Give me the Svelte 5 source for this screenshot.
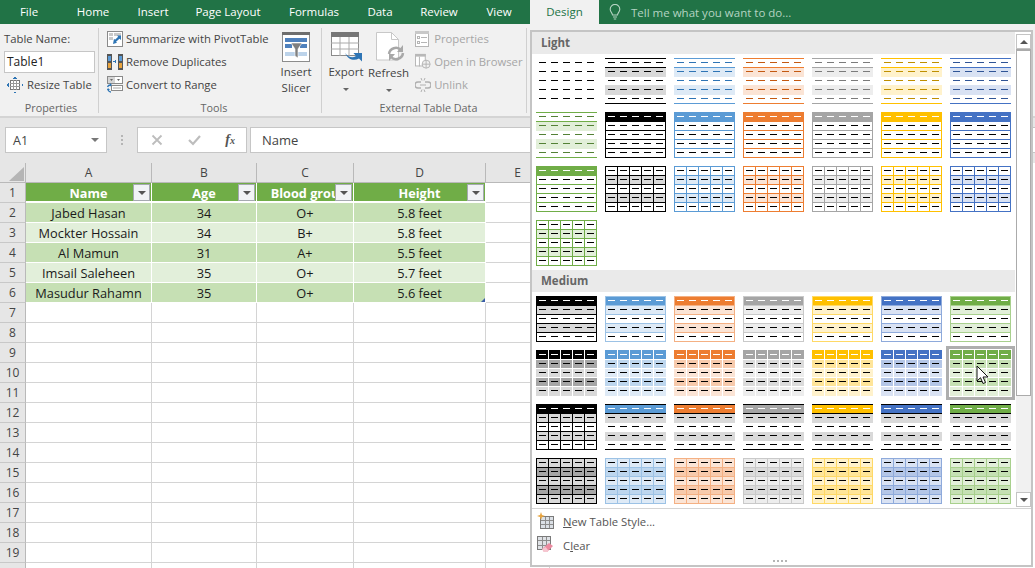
<script>
  const tabs = ['File','Home','Insert','Page Layout','Formulas','Data','Review','View'];
  const pal = [
    { c:'#000000', d:'#000000', lt:'#D9D9D9', mid:'#A6A6A6', soft:'#000000' },
    { c:'#5B9BD5', d:'#2E74B5', lt:'#DEEAF6', mid:'#BDD6EE', soft:'#9CC2E5' },
    { c:'#ED7D31', d:'#C45911', lt:'#FBE4D5', mid:'#F7CAAC', soft:'#F4B083' },
    { c:'#A5A5A5', d:'#7B7B7B', lt:'#EDEDED', mid:'#DBDBDB', soft:'#C9C9C9' },
    { c:'#FFC000', d:'#BF8F00', lt:'#FFF2CC', mid:'#FFE599', soft:'#FFD966' },
    { c:'#4472C4', d:'#2F5496', lt:'#D9E2F3', mid:'#B4C6E7', soft:'#8EAADB' },
    { c:'#70AD47', d:'#538135', lt:'#E2EFD9', mid:'#C5E0B3', soft:'#A8D08D' }
  ];
  const R = (x,y,w,h,f) => ({x,y,w,h,f});
  function dashes(color, headColor){
    const out=[];
    for(let r=0;r<5;r++) for(let c=0;c<5;c++)
      out.push(R(3+12*c,4+9*r,7,1,(r===0&&headColor)?headColor:color));
    return out;
  }
  function hLines(col, all=true){
    const o=[]; for(let r=0;r<=5;r++) if(all||r===0||r===1||r===5) o.push(R(0,r*9,61,1,col)); return o;
  }
  function vLines(col){
    const o=[]; for(let c=0;c<=5;c++) o.push(R(c*12,0,1,46,col)); return o;
  }
  function thumb(type,p){
    const band=(f,rows=[1,3])=>rows.map(r=>R(0,r*9,61,10,f));
    switch(type){
      case 'A': return dashes('#000');
      case 'B': return [...band(p.lt),...hLines(p.c,false),...dashes(p.d)];
      case 'C': return [R(0,0,61,10,p.c),...hLines(p.c),R(0,0,1,46,p.c),R(60,0,1,46,p.c),...dashes('#000','#fff')];
      case 'D': return [...band(p.lt),...hLines(p.c),...vLines(p.c),...dashes('#000')];
      case 'E': return [...band(p.lt),...hLines(p.soft),R(0,0,1,46,p.soft),R(60,0,1,46,p.soft),R(1,1,59,8,p.c),...dashes('#000','#fff')];
      case 'F': return [R(0,0,61,9,p.c),R(0,9,61,9,p.mid),R(0,18,61,9,p.lt),R(0,27,61,9,p.mid),R(0,36,61,10,p.lt),
        ...[9,18,27,36].map(y=>R(0,y,61,1,'#fff')),...[12,24,36,48].map(x=>R(x,0,1,46,'#fff')),...dashes('#000','#fff')];
      case 'G': if(p===pal[0]) return [...band(p.lt),...hLines('#000'),...vLines('#000'),R(0,0,61,10,'#000'),...dashes('#000','#fff')];
        return [R(0,1,61,8,p.c),...band('#D9D9D9').map(b=>({...b,y:b.y+1,h:9})),R(0,0,61,1,'#000'),R(0,9,61,1,'#000'),R(0,45,61,1,'#000'),...dashes('#000','#fff')];
      case 'H': return [R(0,0,61,46,p.lt),...band(p.mid),...hLines(p.soft),...vLines(p.soft),...dashes('#000')];
    }
    return [];
  }
  const light=[{t:'A',p:pal[0]}];
  for(const t of ['B','C','D']) for(let i=0;i<7;i++) light.push({t,p:pal[i]});
  const medium=[];
  for(const t of ['E','F','G','H']) for(let i=0;i<7;i++) medium.push({t,p:pal[i]});

  const headers=['Name','Age','Blood grou','Height'];
  const data=[
    ['Jabed Hasan','34','O+','5.8 feet'],
    ['Mockter Hossain','34','B+','5.8 feet'],
    ['Al Mamun','31','A+','5.5 feet'],
    ['Imsail Saleheen','35','O+','5.7 feet'],
    ['Masudur Rahamn','35','O+','5.6 feet']
  ];
  const emptyRows=[];
  for(let i=7;i<=19;i++) emptyRows.push(i);
</script>

{#snippet thumbSvg(item)}
  <svg class="thumb" width="61" height="46" viewBox="0 0 61 46" shape-rendering="crispEdges">
    {#each thumb(item.t,item.p) as r}
      <rect x={r.x} y={r.y} width={r.w} height={r.h} fill={r.f}/>
    {/each}
  </svg>
{/snippet}

<div class="app">
  <div class="tabs">
    {#each tabs as t}<div class="tab">{t}</div>{/each}
    <div class="tab design">Design</div>
    <div class="tell">
      <svg width="14" height="16" viewBox="0 0 14 16" fill="none" stroke="#b5d3c2" stroke-width="1.1"><path d="M4.5 11c0-2-2.300-3-2.300-5.800a4.800 4.800 0 0 1 9.600 0C11.800 8 9.500 9 9.500 11z"/><path d="M5 13h4M5.800 15h2.400"/></svg>
      <span>Tell me what you want to do...</span>
    </div>
  </div>

  <div class="ribbon">
    <section class="group props">
      <div class="gbody col">
        <div class="line tname">Table Name:</div>
        <div class="namebox">Table1</div>
        <div class="line resize">
          <svg width="18" height="18" viewBox="0 0 18 18" shape-rendering="crispEdges"><rect x="4.500" y="4.500" width="9" height="9" fill="#fff" stroke="#777"/><path d="M4 7.500h10M4 10.500h10M7.500 4v10M10.500 4v10" stroke="#999"/><path d="M9 0l2 2.500H7zM9 18l2-2.500H7zM0 9l2.500-2v4zM18 9l-2.500-2v4z" fill="#2e75b5"/></svg>
          <span>Resize Table</span>
        </div>
      </div>
      <div class="glabel">Properties</div>
    </section>

    <section class="group tools">
      <div class="gbody row">
        <div class="col list">
          <div class="line">
            <svg width="16" height="16" viewBox="0 0 16 16"><rect x=".5" y=".5" width="15" height="15" fill="#fff" stroke="#8a8a8a"/><path d="M2 2h4v3H2zM2 6h4v3H2z" fill="#c9c9c9"/><path d="M7 2h7v3H7z" fill="#c9c9c9"/><path d="M6 13l4-1.200-1-1 3.500-3 1.500 1.200V4.500h-4l1.200 1.300L8 8.800 7 7.800z" fill="#2e75b5"/></svg>
            <span>Summarize with PivotTable</span>
          </div>
          <div class="line">
            <svg width="16" height="16" viewBox="0 0 16 16" shape-rendering="crispEdges"><rect x="0" y="0" width="5" height="16" fill="#555"/><rect x="1" y="2" width="3" height="5" fill="#5b9bd5"/><rect x="1" y="9" width="3" height="5" fill="#e8a33d"/><rect x="11" y="0" width="5" height="16" fill="#555"/><rect x="12" y="2" width="3" height="5" fill="#5b9bd5"/><rect x="12" y="9" width="3" height="5" fill="#e8a33d"/><rect x="6" y="7" width="3" height="1" fill="#2e75b5"/><rect x="8" y="6" width="1" height="3" fill="#2e75b5"/></svg>
            <span>Remove Duplicates</span>
          </div>
          <div class="line">
            <svg width="16" height="17" viewBox="0 0 16 17"><rect x=".5" y=".5" width="15" height="7" fill="#fff" stroke="#8a8a8a"/><path d="M1 1h7v6H1z" fill="#d5d5d5"/><path d="M3 3h3L4.500 5zM10 3h3l-1.500 2z" fill="#666"/><rect x="4.500" y="9.500" width="11" height="5" fill="#fff" stroke="#8a8a8a"/><path d="M6 12h8" stroke="#aaa"/><path d="M.5 11a3 3 0 0 1 3-2M4 16a3 3 0 0 1-3-3" fill="none" stroke="#2e75b5" stroke-width="1.300"/><path d="M3 7l2 2-2 1.500zM1 12l-1 2h3z" fill="#2e75b5"/></svg>
            <span>Convert to Range</span>
          </div>
        </div>
        <div class="big slicer">
          <svg width="28" height="31" viewBox="0 0 28 31" shape-rendering="crispEdges"><rect x=".5" y=".5" width="27" height="29" fill="#fff" stroke="#8c8c8c"/><rect x="0" y="0" width="28" height="3" fill="#6e6e6e"/><rect x="3" y="6" width="22" height="4" fill="#4f81bd"/><rect x="3" y="12" width="7" height="4" fill="#4f81bd"/><rect x="18" y="12" width="7" height="4" fill="#4f81bd"/><rect x="3" y="20" width="22" height="4" fill="#bcd3ea"/><path d="M9 11h11l-4 6v9l-3-2v-7z" fill="#7f7f7f" stroke="#fff" stroke-width=".6" shape-rendering="auto"/></svg>
          <div class="bigtext">Insert<br/>Slicer</div>
        </div>
      </div>
      <div class="glabel">Tools</div>
    </section>

    <section class="group external">
      <div class="gbody row">
        <div class="big export">
          <svg width="31" height="31" viewBox="0 0 31 31"><rect x=".5" y=".5" width="27" height="23" fill="#fff" stroke="#8a8a8a"/><rect x="0" y="0" width="28" height="5" fill="#777"/><path d="M0 11h28M0 17h28M9 5v19M18 5v19" stroke="#aaa"/><path d="M14 21c4 5 8 5 11 3l-2.500-3H31v8.500l-3-3c-5 3-11 1-14-5.500z" fill="#2e75b5"/></svg>
          <div class="bigtext">Export</div>
          <div class="caret"></div>
        </div>
        <div class="big refresh">
          <svg width="29" height="32" viewBox="0 0 29 32" fill="none"><path d="M.5.500h15l7 7V28H.5z" fill="#fff" stroke="#c8c8c8"/><path d="M15.500.5v7h7" stroke="#c8c8c8"/><path d="M13 22a7 7 0 0 1 12-4M27 21a7 7 0 0 1-12 4" stroke="#a8a8a8" stroke-width="2.500"/><path d="M27 13v7h-6zM13 29v-7h6z" fill="#a8a8a8"/></svg>
          <div class="bigtext">Refresh</div>
          <div class="caret"></div>
        </div>
        <div class="col list disabled">
          <div class="line">
            <svg width="16" height="16" viewBox="0 0 16 16" fill="none" stroke="#b5b5b5"><rect x=".5" y=".5" width="13" height="15" fill="#fff"/><rect x="0" y="0" width="14" height="3" fill="#c8c8c8" stroke="none"/><rect x="2.500" y="5.500" width="2" height="2"/><rect x="2.500" y="10.500" width="2" height="2"/><path d="M6 6.500h6M6 11.500h6"/></svg>
            <span>Properties</span>
          </div>
          <div class="line">
            <svg width="16" height="17" viewBox="0 0 18 17" fill="none" stroke="#b0b0b0"><rect x=".5" y=".5" width="11" height="13" fill="#fff"/><rect x="0" y="0" width="12" height="3" fill="#b8b8b8" stroke="none"/><path d="M5 3v11"/><circle cx="12.500" cy="11.500" r="4.500" fill="#f1f1f1"/><path d="M8 11.500h9M12.500 7v9"/></svg>
            <span>Open in Browser</span>
          </div>
          <div class="line">
            <svg width="16" height="16" viewBox="0 0 16 16" fill="none" stroke="#b0b0b0" stroke-width="1.400"><path d="M6 5H3a2.500 2.500 0 0 0 0 6h3M10 5h3a2.500 2.500 0 0 1 0 6h-3"/><path d="M5 8h6M6 1l1 2.500M10 1L9 3.500M6 15l1-2.500M10 15l-1-2.500" stroke-width="1"/></svg>
            <span>Unlink</span>
          </div>
        </div>
      </div>
      <div class="glabel">External Table Data</div>
    </section>
  </div>

  <div class="fbar">
    <div class="fbox namefield"><span>A1</span><i class="caret dark"></i></div>
    <div class="dots"><b></b><b></b><b></b></div>
    <div class="fbox fxbtns">
      <svg width="12" height="12" viewBox="0 0 12 12" stroke="#bdbdbd" stroke-width="1.800"><path d="M1.500 1.500l9 9M10.500 1.500l-9 9"/></svg>
      <svg width="13" height="12" viewBox="0 0 13 12" fill="none" stroke="#bdbdbd" stroke-width="2.200"><path d="M1 6l4 4 7-8"/></svg>
      <span class="fx">f<small>x</small></span>
    </div>
    <div class="fbox formula">Name</div>
  </div>

  <div class="sheet">
    <div class="ch corner"><svg width="16" height="14" viewBox="0 0 16 14"><path d="M16 0v14H1z" fill="#b5b5b5"/></svg></div>
    {#each ['A','B','C','D','E'] as c}<div class="ch">{c}</div>{/each}

    <div class="rh">1</div>
    {#each headers as h}
      <div class="cell th"><span>{h}</span><i class="filter"><b></b></i></div>
    {/each}
    <div class="cell"></div>

    {#each data as row,i}
      <div class="rh">{i+2}</div>
      {#each row as v,j}
        <div class="cell td" class:alt={i%2===1}>{v}{#if i===4 && j===3}<i class="handle"></i>{/if}</div>
      {/each}
      <div class="cell"></div>
    {/each}

    {#each emptyRows as n}
      <div class="rh">{n}</div>
      <div class="cell"></div><div class="cell"></div><div class="cell"></div><div class="cell"></div><div class="cell"></div>
    {/each}
    <div class="rh"></div>
    <div class="cell"></div><div class="cell"></div><div class="cell"></div><div class="cell"></div><div class="cell"></div>
  </div>

  <div class="panel">
    <div class="gallery">
      <div class="scrollarea">
        <div class="sect">Light</div>
        <div class="thumbs">
          {#each light as item}{@render thumbSvg(item)}{/each}
        </div>
        <div class="sect">Medium</div>
        <div class="thumbs">
          {#each medium as item,i}
            <div class="tw" class:sel={i===13}>{@render thumbSvg(item)}</div>
          {/each}
        </div>
      </div>
      <div class="scrollbar">
        <div class="sbtn"><i class="up"></i></div>
        <div class="sthumb"></div>
        <div class="strack"></div>
        <div class="sbtn"><i class="down"></i></div>
      </div>
    </div>
    <div class="menu">
      <div class="mi">
        <svg width="18" height="18" viewBox="0 0 18 18" shape-rendering="crispEdges"><rect x="3.500" y="4.500" width="13" height="12" fill="#dbe0e6" stroke="#7a7a7a"/><path d="M4 8.500h12M4 12.500h12M8 5v11M12 5v11" stroke="#8d8d8d"/><path d="M4 0l1 3 3 1-3 1-1 3-1-3-3-1 3-1z" fill="#e8a33d" shape-rendering="auto"/></svg>
        <span><u>N</u>ew Table Style...</span>
      </div>
      <div class="mi">
        <svg width="18" height="18" viewBox="0 0 18 18"><rect x=".5" y=".5" width="13" height="13" fill="#dfe2e6" stroke="#7a7a7a" shape-rendering="crispEdges"/><path d="M1 4.500h12M1 9h12M5 1v12M9.500 1v12" stroke="#8d8d8d" shape-rendering="crispEdges"/><path d="M5 13l7-6 4 3-6 6H7z" fill="#ec8aa0"/><path d="M5 13l2 3h3l1.500-1.500-3-3.500z" fill="#f6c6d0"/></svg>
        <span>C<u>l</u>ear</span>
      </div>
      <div class="grip"><b></b><b></b><b></b><b></b></div>
    </div>
  </div>

  <svg class="cursor" width="14" height="21" viewBox="0 0 14 21"><path d="M1 1v15l3.500-3.300L7 18.500l2.500-1-2.500-5.500h5z" fill="#fff" stroke="#111" stroke-width="1"/></svg>
</div>

<style>
  :global(body){margin:0;background:#fff;}
  .app{position:relative;width:1035px;height:568px;overflow:hidden;font-family:"Open Sans","Noto Sans",sans-serif;font-size:11.300px;color:#444;background:#fff;}
  .tabs{display:grid;grid-template-columns:58px 70px 50px 100px 72px 60px 58px 62px 69px 1fr;height:24px;background:#217346;color:#fff;align-items:center;font-size:11.500px;}
  .tab{text-align:center;line-height:24px;}
  .design{background:#f1f1f1;color:#217346;height:24px;}
  .tell{display:flex;align-items:center;gap:9px;padding-left:9px;color:#b5d3c2;}

  .ribbon{display:flex;height:92px;background:#f1f1f1;border-bottom:2px solid #d4d4d4;box-sizing:content-box;}
  .group{display:flex;flex-direction:column;border-right:1px solid #d0d0d0;margin-top:4px;height:85px;box-sizing:border-box;}
  .gbody{flex:1;min-height:0;}
  .glabel{text-align:center;color:#666;font-size:10.800px;line-height:16px;height:16px;margin-bottom:-3px;}
  .col{display:flex;flex-direction:column;}
  .row{display:flex;}
  .line{display:flex;align-items:center;height:23px;gap:3px;white-space:nowrap;flex:none;}
  .props{width:99px;padding-left:4px;}
  .tname{height:21px;margin-bottom:2px;}
  .namebox{width:91px;height:22px;box-sizing:border-box;border:1px solid #c6c6c6;background:#fff;line-height:20px;padding-left:2px;color:#222;flex:none;font-size:12px;}
  .resize{margin-left:2px;}
  .tools{width:223px;padding-left:8px;}
  .list{width:173px;margin-top:-1px;}
  .list .line svg{flex:none;}
  .big{display:flex;flex-direction:column;align-items:center;padding-top:4px;}
  .big svg{flex:none;}
  .bigtext{text-align:center;line-height:16px;margin-top:1px;font-size:11.500px;}
  .slicer{width:32px;}
  .external{width:205px;padding-left:9px;}
  .export{width:30px;}
  .refresh{width:42px;margin-left:7px;}
  .refresh .bigtext,.export .bigtext{margin-top:1px;}
  .refresh svg{margin-left:4px;}
  .disabled{margin-left:6px;width:116px;color:#a6a6a6;}
  .caret{width:0;height:0;border:3px solid transparent;border-top:3px solid #666;border-bottom:0;margin-top:8px;}

  .fbar{display:flex;align-items:flex-start;height:45px;background:#e6e6e6;padding:9px 0 0 5px;box-sizing:border-box;}
  .fbox{height:26px;box-sizing:border-box;background:#fff;border:1px solid #c6c6c6;display:flex;align-items:center;}
  .namefield{width:102px;padding:0 7px;justify-content:space-between;font-size:12.500px;color:#444;}
  .caret.dark{border-top-color:#777;border-width:4px 4px 0;margin:0;}
  .dots{width:30px;display:flex;flex-direction:column;align-items:center;gap:2px;padding-top:8px;}
  .dots b{width:2px;height:2px;background:#b5b5b5;}
  .fxbtns{width:110px;padding:0 11px 0 13px;justify-content:space-between;}
  .fx{font-family:"Liberation Serif",serif;font-style:italic;font-size:14px;color:#555;line-height:14px;font-weight:700;}
  .fx small{font-size:10px;}
  .formula{margin-left:3px;flex:1;padding-left:11px;font-size:13px;color:#444;border-right:0;}

  .sheet{display:grid;grid-template-columns:26px 126px 105px 97px 132px 64px;grid-auto-rows:20px;}
  .ch{background:#e6e6e6;text-align:center;line-height:19px;border-right:1px solid #b9b9b9;border-bottom:1px solid #b9b9b9;box-sizing:border-box;font-size:12px;}
  .corner{padding:4px 0 0 7px;line-height:0;}
  .rh{background:#e6e6e6;text-align:center;line-height:20px;border-right:1px solid #b9b9b9;border-bottom:1px solid #c8c8c8;box-sizing:border-box;font-size:12px;}
  .cell{box-sizing:border-box;border-right:1px solid #d4d4d4;border-bottom:1px solid #d4d4d4;position:relative;white-space:nowrap;overflow:hidden;}
  .th{background:#70ad47;color:#fff;font-weight:700;font-size:12.700px;text-align:center;line-height:20px;border-right:1px solid #fff;border-bottom:2px solid #fff;}
  .filter{position:absolute;right:1px;top:1px;width:17px;height:17px;box-sizing:border-box;background:#f1f3f6;border:1px solid #a5a9b0;display:flex;align-items:center;justify-content:center;}
  .filter b{width:0;height:0;border:4px solid transparent;border-top:4px solid #555;border-bottom:0;}
  .td{background:#c6e0b4;color:#1a1a1a;font-size:12.800px;text-align:center;line-height:20px;border-right:1px solid #fff;border-bottom:1px solid #fff;}
  .td.alt{background:#e2efda;}
  .handle{position:absolute;right:0;bottom:0;width:0;height:0;border-left:4px solid transparent;border-bottom:4px solid #3b5da8;}

  .panel{position:absolute;left:530px;top:30px;width:503px;height:537px;box-sizing:border-box;background:#fff;border:2px solid #c4c4c4;display:flex;flex-direction:column;}
  .gallery{display:flex;height:475px;}
  .scrollarea{width:484px;}
  .sect{height:22px;line-height:22px;background:#eaeaea;color:#666;font-weight:700;padding-left:9px;font-size:11.500px;}
  .thumbs{display:grid;grid-template-columns:repeat(7,61px);column-gap:8px;row-gap:8px;padding:4px;}
  .thumb{display:block;}
  .tw{position:relative;height:46px;}
  .sel{outline:3px solid #aeaeae;outline-offset:1px;background:#fff;}
  .scrollbar{width:15px;margin-left:1px;margin-top:2px;display:flex;flex-direction:column;height:473px;}
  .sbtn{height:15px;box-sizing:border-box;border:1px solid #c4c4c4;display:flex;align-items:center;justify-content:center;flex:none;}
  .up{border:4px solid transparent;border-bottom:4px solid #555;border-top:0;}
  .down{border:4px solid transparent;border-top:4px solid #555;border-bottom:0;}
  .sthumb{height:347px;box-sizing:border-box;border:1px solid #ababab;border-top-width:2px;flex:none;}
  .strack{flex:1;background:#f1f1f1;}
  .menu{border-top:1px solid #d4d4d4;flex:1;position:relative;margin-top:1px;}
  .mi{display:flex;align-items:center;height:24px;padding-left:5px;font-size:11.300px;color:#555;}
  .mi svg{flex:none;}
  .mi span{margin-left:8px;}
  .grip{position:absolute;left:241px;bottom:3px;display:flex;gap:2px;}
  .grip b{width:2px;height:2px;background:#b5b5b5;}
  .cursor{position:absolute;left:976px;top:365px;}
</style>
